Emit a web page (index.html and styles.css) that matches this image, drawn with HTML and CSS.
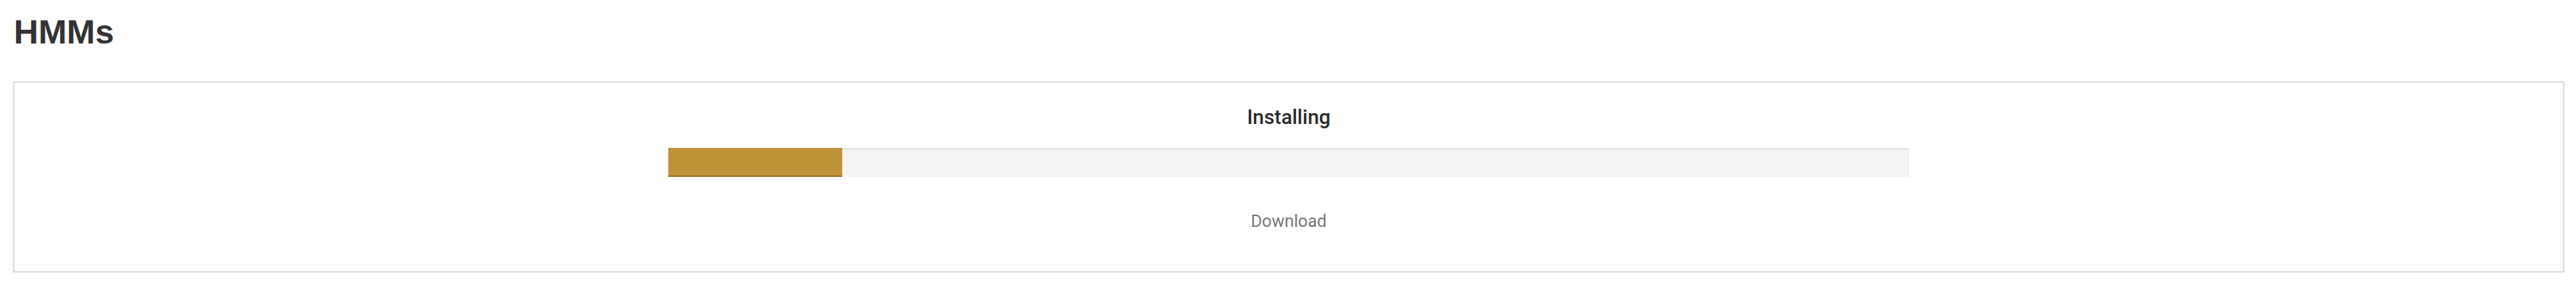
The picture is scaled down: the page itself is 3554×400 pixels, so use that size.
FILE: index.html
```html
<!DOCTYPE html>
<html>
<head>
<meta charset="utf-8">
<link rel="stylesheet" href="styles.css">
</head>
<body>
<div class="page">
  <h1 class="title">HMMs</h1>
  <div class="panel">
    <div class="status">Installing</div>
    <div class="progress"><div class="progress-fill" style="width: 14.02%"></div></div>
    <div class="action">Download</div>
  </div>
</div>
</body>
</html>
```
FILE: styles.css
```css
html, body {
  margin: 0;
  padding: 0;
  background: #ffffff;
}
.page {
  padding: 18px 16px 0 18px;
}
.title {
  margin: 0 0 42px 0;
  padding-left: 1px;
  font-family: "Liberation Sans", Arial, sans-serif;
  font-weight: bold;
  font-size: 47px;
  line-height: 52px;
  color: #333333;
}
.panel {
  border: 2px solid #dddddd;
  box-shadow: 0 1px 2px rgba(0,0,0,0.05);
  padding: 32px 0 56px 0;
  display: flex;
  flex-direction: column;
  align-items: center;
}
.status {
  font-family: Roboto, "Liberation Sans", sans-serif;
  font-weight: 500;
  font-size: 28px;
  line-height: 32px;
  color: #2b2b2b;
}
.progress {
  margin-top: 26px;
  width: 1712px;
  height: 40px;
  background: #f4f4f4;
  box-shadow: inset 0 2px 3px rgba(0,0,0,0.08);
  display: flex;
}
.progress-fill {
  height: 100%;
  background: #bf9237;
  box-shadow: inset 0 -2px 0 rgba(0,0,0,0.2);
}
.action {
  margin-top: 48px;
  font-family: Roboto, "Liberation Sans", sans-serif;
  font-weight: 400;
  font-size: 23.5px;
  line-height: 26px;
  color: #777777;
}
```
